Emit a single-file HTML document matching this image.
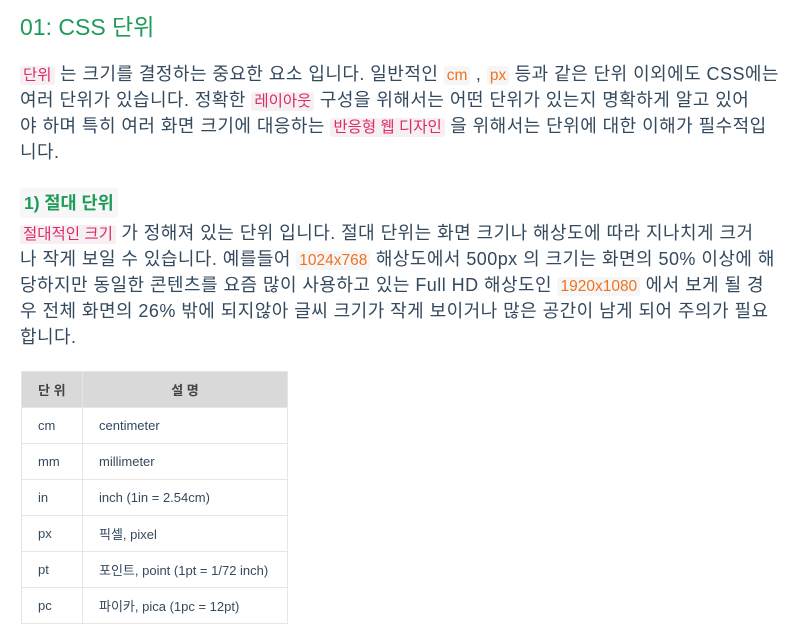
<!DOCTYPE html>
<html><head><meta charset="utf-8"><style>
body{margin:0;background:#fff;font-family:"Liberation Sans","Noto Sans CJK KR",sans-serif;color:#34495e;}
.w{position:relative;width:791px;height:631px;overflow:hidden}
h1{position:absolute;left:20px;top:11px;margin:0;font-size:23px;font-weight:normal;color:#1e9b58;line-height:32px}
.l{position:absolute;left:20px;height:26px;font-size:18px;letter-spacing:0.45px;line-height:26px;white-space:nowrap}
.c{background:#f7f0f3;color:#dd2a6b;border-radius:3px;padding:1px 3px;font-size:15.5px;letter-spacing:0;line-height:1}
.o{background:#f6f6f6;color:#f0721f;border-radius:3px;padding:1px 3px;font-size:15.5px;letter-spacing:0;line-height:1}
h2{position:absolute;left:20px;top:188px;margin:0;font-size:17.5px;color:#1e9b58;background:#f7f7f7;border-radius:4px;padding:3px 4px;line-height:24px}
table{position:absolute;left:21px;top:371px;border-collapse:collapse;font-size:13px}
td,th{border:1px solid #e6e6e6;height:35px;padding:0 0 0 16px;text-align:left;font-weight:normal}
th{background:#d9d9d9;font-weight:bold;color:#444;font-size:13px}
</style></head><body><div class="w">
<h1>01: CSS 단위</h1>
<div class="l" style="top:61px"><span class="c">단위</span> 는 크기를 결정하는 중요한 요소 입니다. 일반적인 <span class="o">cm</span> , <span class="o">px</span> 등과 같은 단위 이외에도 CSS에는</div>
<div class="l" style="top:87px">여러 단위가 있습니다. 정확한 <span class="c">레이아웃</span> 구성을 위해서는 어떤 단위가 있는지 명확하게 알고 있어</div>
<div class="l" style="top:113px">야 하며 특히 여러 화면 크기에 대응하는 <span class="c">반응형 웹 디자인</span> 을 위해서는 단위에 대한 이해가 필수적입</div>
<div class="l" style="top:139px">니다.</div>
<h2>1) 절대 단위</h2>
<div class="l" style="top:220px"><span class="c">절대적인 크기</span> 가 정해져 있는 단위 입니다. 절대 단위는 화면 크기나 해상도에 따라 지나치게 크거</div>
<div class="l" style="top:246px">나 작게 보일 수 있습니다. 예를들어 <span class="o">1024x768</span> 해상도에서 500px 의 크기는 화면의 50% 이상에 해</div>
<div class="l" style="top:272px">당하지만 동일한 콘텐츠를 요즘 많이 사용하고 있는 Full HD 해상도인 <span class="o">1920x1080</span> 에서 보게 될 경</div>
<div class="l" style="top:298px">우 전체 화면의 26% 밖에 되지않아 글씨 크기가 작게 보이거나 많은 공간이 남게 되어 주의가 필요</div>
<div class="l" style="top:324px">합니다.</div>
<table>
<tr><th style="width:44px">단 위</th><th style="width:204px;text-align:center;padding:0">설 명</th></tr>
<tr><td>cm</td><td>centimeter</td></tr>
<tr><td>mm</td><td>millimeter</td></tr>
<tr><td>in</td><td>inch (1in = 2.54cm)</td></tr>
<tr><td>px</td><td>픽셀, pixel</td></tr>
<tr><td>pt</td><td>포인트, point (1pt = 1/72 inch)</td></tr>
<tr><td>pc</td><td>파이카, pica (1pc = 12pt)</td></tr>
</table>
</div></body></html>
